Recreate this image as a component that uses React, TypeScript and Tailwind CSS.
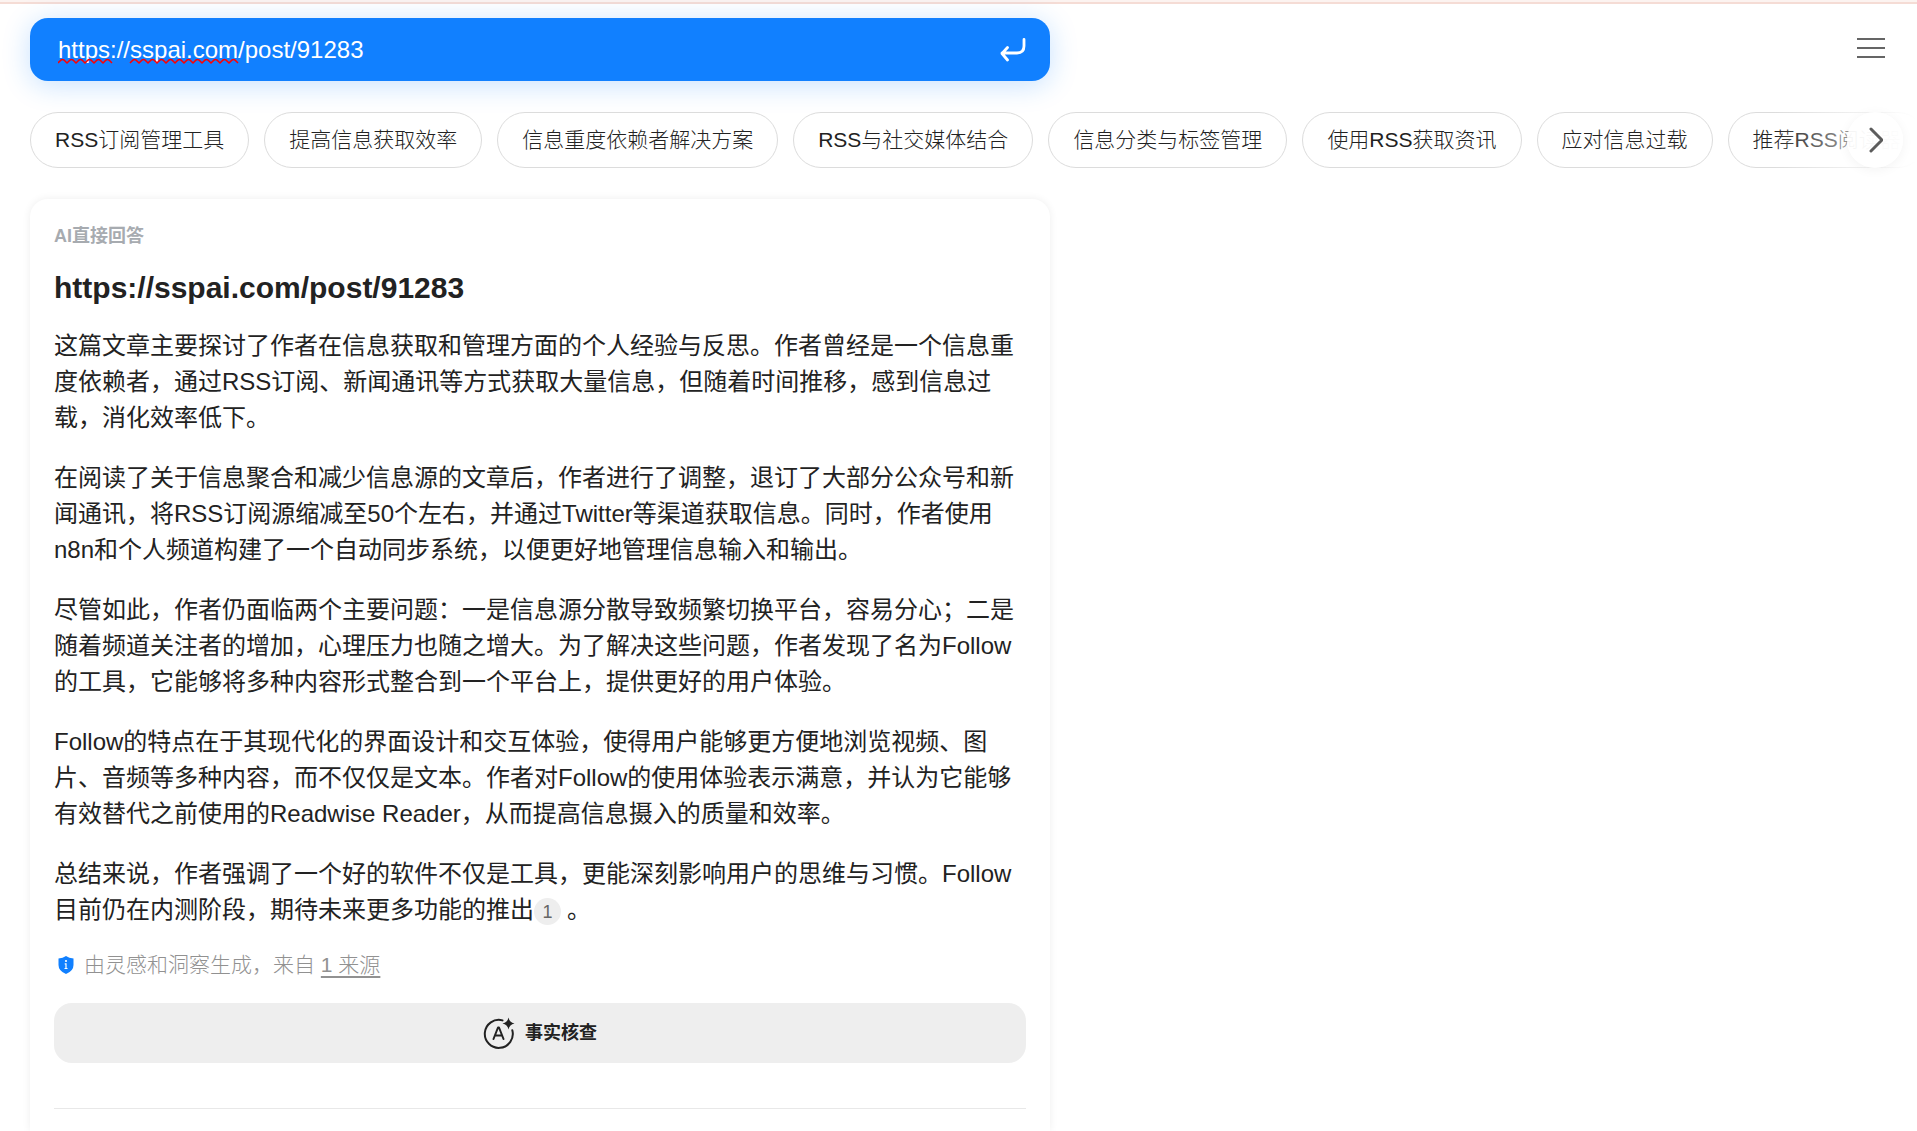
import React, { useState } from 'react';

const topics = [
  'RSS订阅管理工具',
  '提高信息获取效率',
  '信息重度依赖者解决方案',
  'RSS与社交媒体结合',
  '信息分类与标签管理',
  '使用RSS获取资讯',
  '应对信息过载',
  '推荐RSS阅读器',
];

const paragraphs = [
  '这篇文章主要探讨了作者在信息获取和管理方面的个人经验与反思。作者曾经是一个信息重度依赖者，通过RSS订阅、新闻通讯等方式获取大量信息，但随着时间推移，感到信息过载，消化效率低下。',
  '在阅读了关于信息聚合和减少信息源的文章后，作者进行了调整，退订了大部分公众号和新闻通讯，将RSS订阅源缩减至50个左右，并通过Twitter等渠道获取信息。同时，作者使用n8n和个人频道构建了一个自动同步系统，以便更好地管理信息输入和输出。',
  '尽管如此，作者仍面临两个主要问题：一是信息源分散导致频繁切换平台，容易分心；二是随着频道关注者的增加，心理压力也随之增大。为了解决这些问题，作者发现了名为Follow的工具，它能够将多种内容形式整合到一个平台上，提供更好的用户体验。',
  'Follow的特点在于其现代化的界面设计和交互体验，使得用户能够更方便地浏览视频、图片、音频等多种内容，而不仅仅是文本。作者对Follow的使用体验表示满意，并认为它能够有效替代之前使用的Readwise Reader，从而提高信息摄入的质量和效率。',
];

// Wavy line from x to end, one wave every 9px
function wave(x: number, end: number) {
  let d = `M${x} 5`;
  for (let i = x; i + 9 <= end; i += 9) {
    d += ' l3 -3 q1.500 -1 3 0 l3 3';
  }
  return d;
}

function SpellingMarks() {
  return (
    <svg
      className="absolute left-7 top-10 pointer-events-none"
      width="184"
      height="8"
      viewBox="0 0 184 8"
      fill="none"
      stroke="#ff0000"
      strokeWidth="1.6"
      strokeLinejoin="round"
      aria-hidden="true"
    >
      <path d={wave(0, 54)} />
      <path d={wave(72, 180)} />
    </svg>
  );
}

function SearchBar() {
  const [query, setQuery] = useState('https://sspai.com/post/91283');

  return (
    <form
      onSubmit={(e) => e.preventDefault()}
      className="relative flex items-center w-full max-w-[1020px] h-[63px] pl-7 pr-6 rounded-[18px] bg-[#1180ff] shadow-[0_4px_28px_rgba(17,128,255,0.24)]"
    >
      <input
        type="text"
        aria-label="搜索"
        spellCheck={false}
        value={query}
        onChange={(e) => setQuery(e.target.value)}
        className="flex-1 min-w-0 bg-transparent text-2xl text-white outline-none"
      />
      <SpellingMarks />
      <button type="submit" aria-label="提交" className="text-white">
        <svg width="26" height="26" viewBox="0 0 26 26" fill="none" stroke="currentColor" strokeWidth="2.8" strokeLinecap="round" strokeLinejoin="round">
          <path d="M24 2.5v6.5q0 7-7 7H2M7.500 10.500L2 16.500l5.500 6.500" />
        </svg>
      </button>
    </form>
  );
}

function TopicChips() {
  return (
    <div className="relative mt-[31px]">
      <div className="flex gap-[15px] overflow-hidden">
        {topics.map((topic) => (
          <button
            key={topic}
            type="button"
            className="shrink-0 h-14 px-6 rounded-full border border-[#dcdcdc] bg-white text-[21px] font-light text-[#222]"
          >
            {topic}
          </button>
        ))}
      </div>
      <div className="absolute right-0 inset-y-0 w-36 pr-3.5 flex items-center justify-end bg-linear-to-r from-white/0 to-white">
        <button
          type="button"
          aria-label="更多"
          className="size-14 rounded-full bg-white/90 text-[#5c5c5c] flex items-center justify-center shadow-[0_2px_12px_rgba(0,0,0,0.05)]"
        >
          <svg width="16" height="26" viewBox="0 0 16 26" fill="none" stroke="currentColor" strokeWidth="3" strokeLinecap="round" strokeLinejoin="round">
            <path d="M4 2l11 11L4 24" />
          </svg>
        </button>
      </div>
    </div>
  );
}

function ShieldIcon() {
  return (
    <svg width="16" height="18" viewBox="0 0 16 18" aria-hidden="true">
      <path d="M8 0Q11 2.300 15.500 2.600V9Q15.500 15 8 18Q0.500 15 0.500 9V2.600Q5 2.300 8 0Z" fill="#1180ff" />
      <circle cx="8" cy="5" r="1.100" fill="#fff" />
      <path d="M6.700 7.800H8V12.500M6.500 12.500h3" stroke="#fff" strokeWidth="1.200" fill="none" />
    </svg>
  );
}

function FactCheckIcon() {
  return (
    <svg width="32" height="32" viewBox="0 0 32 32" fill="none" stroke="currentColor" strokeWidth="2" strokeLinecap="round" strokeLinejoin="round" aria-hidden="true">
      <path d="M19.500 3.400A14 14 0 1 0 29.300 13.200" />
      <path d="M10.500 22L15 10.500h1L20.500 22M12 18.500h7" />
      <path d="M25.500 0.500Q26.500 5.500 31.500 6.500Q26.500 7.500 25.500 12.500Q24.500 7.500 19.500 6.500Q24.500 5.500 25.500 0.500Z" fill="currentColor" stroke="none" />
    </svg>
  );
}

function AnswerCard() {
  return (
    <section className="mt-[31px] flex-1 w-full max-w-[1020px] px-6 pt-[25px] rounded-t-[18px] bg-white shadow-[0_0_8px_rgba(0,0,0,0.07)]">
      <p className="text-lg leading-6 font-bold text-[#a7abb0]">AI直接回答</p>
      <h1 className="mt-5 text-[30px] leading-10 font-bold text-[#222]">https://sspai.com/post/91283</h1>

      <div className="mt-5 space-y-6 text-2xl leading-9 text-[#222]">
        {paragraphs.map((text) => (
          <p key={text}>{text}</p>
        ))}
        <p>
          总结来说，作者强调了一个好的软件不仅是工具，更能深刻影响用户的思维与习惯。Follow目前仍在内测阶段，期待未来更多功能的推出
          <a
            href="#source-1"
            className="inline-flex items-center justify-center align-middle size-[27px] mr-1.5 rounded-full bg-[#eee] text-lg leading-none text-[#666] font-light"
          >
            1
          </a>
          。
        </p>
      </div>

      <div className="mt-[21px] pl-1 flex items-center gap-2.5 text-[21px] leading-8 font-light text-[#919191]">
        <ShieldIcon />
        <p>
          由灵感和洞察生成，来自{' '}
          <a href="#sources" className="underline underline-offset-4 decoration-2">
            1 来源
          </a>
        </p>
      </div>

      <button
        type="button"
        className="mt-[22px] w-full h-[60px] rounded-[18px] bg-[#eee] flex items-center justify-center gap-2.5 text-lg font-bold text-[#222]"
      >
        <FactCheckIcon />
        事实核查
      </button>
      <hr className="mt-[45px] border-[#e8e8e8]" />
    </section>
  );
}

export default function App() {
  return (
    <div className="h-screen overflow-hidden flex flex-col bg-white font-['Liberation_Sans','Noto_Sans_CJK_SC',sans-serif]">
      <div className="shrink-0 h-1 bg-[#fcf3f0] border-b-2 border-[#f5dcd5]" />
      <div className="flex-1 flex flex-col pl-[30px] pt-3.5">
        <header className="flex items-start justify-between pr-8">
          <SearchBar />
          <button type="button" aria-label="菜单" className="mt-5 text-[#333]">
            <svg width="28" height="20" viewBox="0 0 28 20" stroke="currentColor" strokeWidth="1.500">
              <path d="M0 1h28M0 10h28M0 19h28" />
            </svg>
          </button>
        </header>
        <TopicChips />
        <AnswerCard />
      </div>
    </div>
  );
}
